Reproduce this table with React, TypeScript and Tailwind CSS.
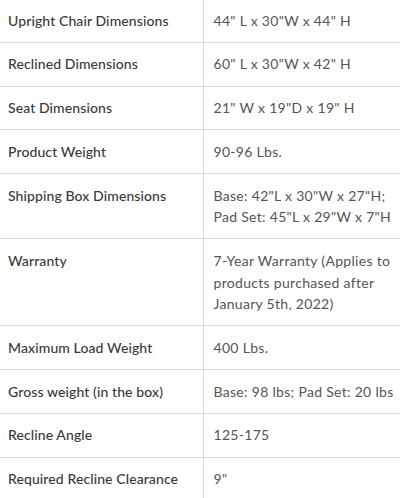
const specs: { label: string; value: string }[] = [
  { label: 'Upright Chair Dimensions', value: '44" L x 30"W x 44" H' },
  { label: 'Reclined Dimensions', value: '60" L x 30"W x 42" H' },
  { label: 'Seat Dimensions', value: '21" W x 19"D x 19" H' },
  { label: 'Product Weight', value: '90-96 Lbs.' },
  { label: 'Shipping Box Dimensions', value: 'Base: 42"L x 30"W x 27"H; Pad Set: 45"L x 29"W x 7"H' },
  { label: 'Warranty', value: '7-Year Warranty (Applies to products purchased after January 5th, 2022)' },
  { label: 'Maximum Load Weight', value: '400 Lbs.' },
  { label: 'Gross weight (in the box)', value: 'Base: 98 lbs; Pad Set: 20 lbs' },
  { label: 'Recline Angle', value: '125-175' },
  { label: 'Required Recline Clearance', value: '9"' },
];

export default function App() {
  return (
    <div className="h-[498px] w-[400px] overflow-hidden bg-white font-['Lato',sans-serif] text-[14px] leading-[21.5px]">
      <table className="-mt-[2px] w-full border-collapse">
        <tbody>
          {specs.map(spec => (
            <tr key={spec.label} className="border-t border-b border-[#dcdcdc]">
              <td className="w-[203px] py-[10.65px] pl-2 pr-2 align-top font-medium tracking-[0.1px] text-[#3a3a3a]">
                {spec.label}
              </td>
              <td className="border-l border-[#dcdcdc] py-[10.65px] pl-[10px] pr-[4px] align-top tracking-[0.3px] text-[#555]">
                {spec.value}
              </td>
            </tr>
          ))}
        </tbody>
      </table>
    </div>
  );
}
